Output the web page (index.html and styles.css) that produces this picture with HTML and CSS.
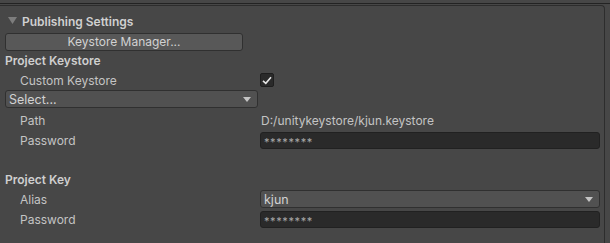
FILE: index.html
```html
<!DOCTYPE html>
<html lang="en">
<head>
    <meta charset="UTF-8">
    <title>Publishing Settings</title>
    <link rel="stylesheet" href="styles.css">
</head>
<body>
    <div class="top-line"></div>
    <div class="panel">
        <div class="foldout">
            <svg class="fold-arrow" width="9" height="8" viewBox="0 0 9 8"><path d="M0 0 H9 L4.5 7 Z" fill="#7d7d7d"/></svg>
            <span>Publishing Settings</span>
        </div>

        <button class="button">Keystore Manager...</button>

        <div class="section-title first">Project Keystore</div>
        <div class="row">
            <span class="label">Custom Keystore</span>
            <span class="checkbox">
                <svg width="10" height="9" viewBox="0 0 10 9"><path d="M1 4.8 L3.8 7.3 L9 1.2" fill="none" stroke="#e6e6e6" stroke-width="1.6"/></svg>
            </span>
        </div>
        <div class="dropdown select-wide">
            <span>Select...</span>
            <svg class="drop-arrow" width="8" height="5" viewBox="0 0 8 5"><path d="M0 0 H8 L4 5 Z" fill="#c4c4c4"/></svg>
        </div>
        <div class="row spaced first-after">
            <span class="label">Path</span>
            <span class="value">D:/unitykeystore/kjun.keystore</span>
        </div>
        <div class="row spaced">
            <span class="label">Password</span>
            <span class="field">********</span>
        </div>

        <div class="section-title">Project Key</div>
        <div class="row">
            <span class="label">Alias</span>
            <span class="dropdown value-drop">
                <span>kjun</span>
                <svg class="drop-arrow" width="8" height="5" viewBox="0 0 8 5"><path d="M0 0 H8 L4 5 Z" fill="#c4c4c4"/></svg>
            </span>
        </div>
        <div class="row spaced">
            <span class="label">Password</span>
            <span class="field">********</span>
        </div>
    </div>
</body>
</html>
```

FILE: styles.css
```css
:root {
    --bg: #474747;
    --text: #c4c4c4;
    --border-dark: #242424;
    --field-bg: #2a2a2a;
    --button-bg: #585858;
    --dropdown-bg: #515151;
}

body {
    margin: 0;
    padding-top: 3px;
    font-family: Inter, 'Liberation Sans', sans-serif;
    font-size: 12px;
    background-color: var(--bg);
    color: var(--text);
    height: 240px;
    overflow: hidden;
}

.top-line {
    height: 1px;
    background-color: #232323;
}

.panel {
    margin-top: 1px;
    width: 605px;
    height: 250px;
    border-top: 1px solid #2d2d2d;
    border-right: 1px solid #2d2d2d;
    border-top-right-radius: 4px;
    box-sizing: border-box;
    padding-left: 5px;
}

.foldout {
    display: flex;
    align-items: center;
    height: 18px;
    margin-top: 6px;
    font-weight: 600;
    color: #d0d0d0;
}

.fold-arrow {
    margin-left: 3px;
    margin-right: 5px;
}

.button {
    display: block;
    margin-top: 3px;
    width: 238px;
    height: 18px;
    padding: 0;
    background-color: var(--button-bg);
    border: 1px solid #303030;
    border-radius: 3px;
    color: #d2d2d2;
    font-family: inherit;
    font-size: 12px;
    line-height: 16px;
}

.section-title {
    height: 18px;
    line-height: 18px;
    margin-top: 22px;
    font-weight: 600;
    color: #cfcfcf;
}

.section-title.first {
    margin-top: 1px;
}

.row {
    display: flex;
    align-items: center;
    height: 18px;
    margin-top: 1px;
}

.row.spaced {
    margin-top: 2px;
}

.row.first-after {
    margin-top: 3px;
}

.label {
    width: 240px;
    padding-left: 15px;
    flex-shrink: 0;
}

.value {
    padding-left: 1px;
}

.checkbox {
    display: flex;
    align-items: center;
    justify-content: center;
    width: 12px;
    height: 12px;
    background-color: var(--field-bg);
    border: 1px solid #1e1e1e;
    border-radius: 2px;
}

.dropdown {
    display: flex;
    align-items: center;
    justify-content: space-between;
    height: 18px;
    box-sizing: border-box;
    padding: 0 6px 0 3px;
    background-color: var(--dropdown-bg);
    border: 1px solid #303030;
    border-radius: 3px;
    color: #d2d2d2;
    font-size: 12.5px;
}

.select-wide {
    width: 253px;
    margin-top: 1px;
}

.value-drop {
    width: 340px;
}

.field {
    display: flex;
    align-items: center;
    width: 340px;
    height: 17px;
    box-sizing: border-box;
    padding: 3px 0 0 3px;
    background-color: var(--field-bg);
    border: 1px solid #212121;
    border-radius: 3px;
    color: #a8a8a8;
    font-size: 11px;
    letter-spacing: 0.6px;
}
```
